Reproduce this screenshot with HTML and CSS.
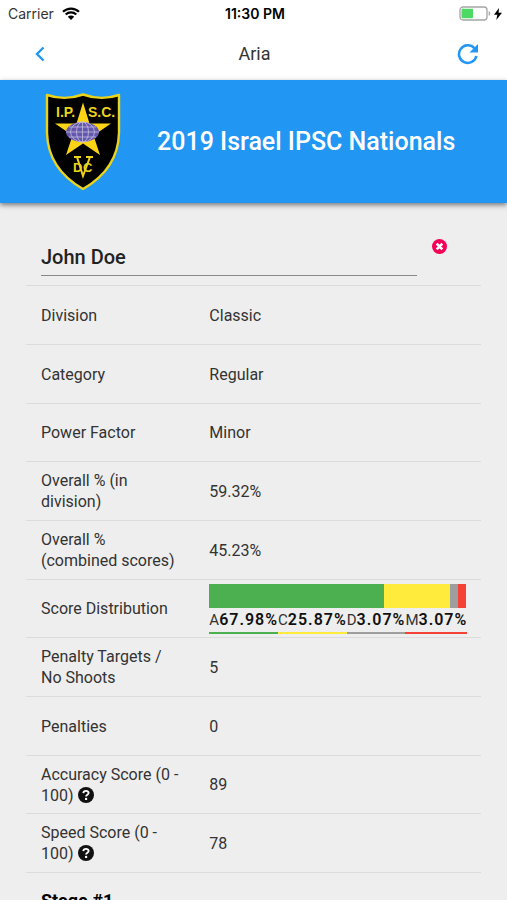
FILE: index.html
```html
<!DOCTYPE html>
<html lang="en">
<head>
<meta charset="utf-8">
<meta name="viewport" content="width=device-width, initial-scale=1">
<title>Aria</title>
	<link rel="stylesheet" href="styles.css">
</head>
<body>
	<div class="status-bar">
		<div class="carrier">
			<span>Carrier</span>
			<svg width="18" height="13" viewBox="0 0 18 13">
				<path d="M1 4.800a11.500 11.500 0 0 1 16 0M3.700 7.500a7.600 7.600 0 0 1 10.600 0" fill="none" stroke="#000" stroke-width="2.200"/>
				<path d="M9 13L5.800 9.700a4.600 4.600 0 0 1 6.400 0z"/>
			</svg>
		</div>
		<span class="time">11:30 PM</span>
		<div class="power">
			<svg width="32" height="15" viewBox="0 0 32 15">
				<rect x="1" y="1" width="27" height="13" rx="3" fill="#fff" stroke="#a5a5a5" stroke-width="1.300"/>
				<rect x="2.500" y="2.700" width="11.500" height="9.600" rx="1" fill="#4cd964"/>
				<path d="M29.700 5v5c2-.8 2-4.200 0-5z" fill="#a5a5a5"/>
			</svg>
			<svg width="8" height="12" viewBox="0 0 8 12">
				<path d="M5 0L0 6.800h3.300L2.300 12 8 4.800H4.600z"/>
			</svg>
		</div>
	</div>

	<nav class="nav-bar">
		<a href="#back" aria-label="Back">
			<svg width="24" height="24" viewBox="0 0 24 24">
				<path d="M15.500 5.500L9 12l6.500 6.500" fill="none" stroke="#2196f3" stroke-width="2.400"/>
			</svg>
		</a>
		<span>Aria</span>
		<button type="button" aria-label="Refresh">
			<svg width="22" height="22" viewBox="0 0 22 22">
				<path d="M17.300 5.200A8.800 8.800 0 1 0 19.400 13" fill="none" stroke="#2196f3" stroke-width="2.500"/>
				<path d="M21 1v8.500h-8.500z" fill="#2196f3"/>
			</svg>
		</button>
	</nav>

	<header class="match-header">
		<svg class="logo" width="76" height="98" viewBox="0 0 76 98">
			<path d="M2 2Q20 8 38 1.500Q56 8 74 2V40Q73 76 38 96Q3 76 2 40z" fill="#000" stroke="#ead31c" stroke-width="2.400" stroke-linejoin="round"/>
			<path d="M38 9.500l6.500 21H66L48.500 42.500l6.500 19.500L38 50.500 21 62l6.500-19.500L10 30.500h21.500z" fill="#fbd515"/>
			<ellipse cx="37.500" cy="39" rx="16.500" ry="10" fill="#6458ad"/>
			<g fill="none" stroke="#c4bde0" stroke-width=".8">
				<ellipse cx="37.500" cy="39" rx="12" ry="10"/>
				<ellipse cx="37.500" cy="39" rx="6" ry="10"/>
				<path d="M37.500 29v20M21 39h33M24 34h27M24 44h27"/>
			</g>
			<text x="11" y="24">I.P.</text>
			<text x="43" y="24">S.C.</text>
			<path d="M29 64h7M41 64h7M32 64l6 19 7-19" fill="none" stroke="#ead31c" stroke-width="2"/>
			<text class="logo-small" x="28" y="79">D</text>
			<text class="logo-small" x="38" y="79">C</text>
		</svg>
		<h1>2019 Israel IPSC Nationals</h1>
	</header>

	<main>
		<form class="shooter">
			<input type="text" value="John Doe" aria-label="Shooter">
			<button type="button" aria-label="Remove">
				<svg width="15" height="15" viewBox="0 0 15 15">
					<circle cx="7.500" cy="7.500" r="7.500" fill="#f50057"/>
					<path d="M4.700 4.700l5.600 5.600M10.300 4.700l-5.600 5.600" stroke="#fff" stroke-width="2.600"/>
				</svg>
			</button>
		</form>

		<table>
			<tr><th scope="row">Division</th><td>Classic</td></tr>
			<tr><th scope="row">Category</th><td>Regular</td></tr>
			<tr><th scope="row">Power Factor</th><td>Minor</td></tr>
			<tr><th scope="row">Overall % (in division)</th><td>59.32%</td></tr>
			<tr><th scope="row">Overall % (combined scores)</th><td>45.23%</td></tr>
			<tr>
				<th scope="row">Score Distribution</th>
				<td>
					<div class="bar">
						<div class="alpha" style="width: 67.98%"></div>
						<div class="charlie" style="width: 25.87%"></div>
						<div class="delta" style="width: 3.07%"></div>
						<div class="miss" style="width: 3.07%"></div>
					</div>
					<div class="legend">
						<span class="alpha">A<b>67.98%</b></span>
						<span class="charlie">C<b>25.87%</b></span>
						<span class="delta">D<b>3.07%</b></span>
						<span class="miss">M<b>3.07%</b></span>
					</div>
				</td>
			</tr>
			<tr><th scope="row">Penalty Targets / No Shoots</th><td>5</td></tr>
			<tr><th scope="row">Penalties</th><td>0</td></tr>
			<tr>
				<th scope="row">Accuracy Score (0 - 100)
					<svg class="help" width="16" height="16" viewBox="0 0 16 16">
						<circle cx="8" cy="8" r="8" fill="#111"/>
						<path d="M5.300 6.200C5.600 3 10.700 3.200 10.600 6c0 1.900-2.500 1.600-2.500 3.600" fill="none" stroke="#fff" stroke-width="1.900"/>
						<circle cx="8.100" cy="11.900" r="1.200" fill="#fff"/>
					</svg>
				</th>
				<td>89</td>
			</tr>
			<tr>
				<th scope="row">Speed Score (0 - 100)
					<svg class="help" width="16" height="16" viewBox="0 0 16 16">
						<circle cx="8" cy="8" r="8" fill="#111"/>
						<path d="M5.300 6.200C5.600 3 10.700 3.200 10.600 6c0 1.900-2.500 1.600-2.500 3.600" fill="none" stroke="#fff" stroke-width="1.900"/>
						<circle cx="8.100" cy="11.900" r="1.200" fill="#fff"/>
					</svg>
				</th>
				<td>78</td>
			</tr>
		</table>

		<h2>Stage #1</h2>
	</main>
</body>
</html>
```
FILE: styles.css
```css
* {
	box-sizing: border-box;
}
body {
	font-family: Roboto, sans-serif;
	font-size: 16px;
	line-height: 21px;
	color: #333;
	background: #eee;
	margin: 0;
	height: 100vh;
	display: flex;
	flex-direction: column;
	overflow: hidden;
}
svg {
	display: block;
}
button {
	border: 0;
	padding: 0;
	background: none;
	cursor: pointer;
}

/* phone status bar */
.status-bar {
	display: grid;
	grid-template-columns: 1fr auto 1fr;
	align-items: center;
	height: 27px;
	padding: 0 5px 0 8px;
	background: #fff;
	font-family: Inter, sans-serif;
	font-size: 14px;
}
.carrier, .power {
	display: flex;
	align-items: center;
}
.carrier {
	gap: 8px;
}
.power {
	justify-content: flex-end;
	gap: 3px;
}
.time {
	font-weight: 600;
	color: #000;
}

.nav-bar {
	display: flex;
	align-items: center;
	justify-content: space-between;
	height: 53px;
	padding: 0 28px;
	background: #fff;
	font-size: 18px;
}

.match-header {
	display: flex;
	align-items: center;
	gap: 36px;
	height: 123px;
	flex-shrink: 0;
	padding: 0 45px;
	background: #2196f3;
	box-shadow: 0 2px 5px rgba(0, 0, 0, 0.5);
}
.logo {
	flex-shrink: 0;
}
.logo text {
	font: bold 14px "Liberation Sans", sans-serif;
	fill: #ead31c;
}
.logo .logo-small {
	font-size: 13px;
}
h1 {
	margin: 0;
	font-size: 25px;
	font-weight: 500;
	line-height: 32px;
	white-space: nowrap;
	color: #fff;
}

main {
	flex: 1;
	min-height: 0;
	padding: 36px 26px 0;
}
.shooter {
	display: flex;
	align-items: flex-start;
	gap: 15px;
	height: 46px;
	padding: 0 34px 0 15px;
}
.shooter input {
	flex: 1;
	min-width: 0;
	height: 37px;
	padding: 0;
	border: 0;
	border-bottom: 1px solid #888;
	background: none;
	font: 500 20px Roboto, sans-serif;
	color: #222;
}

table {
	width: 100%;
	table-layout: fixed;
	border-spacing: 0;
}
th, td {
	height: 59px;
	padding: 0 15px;
	border-top: 1px solid #dcdcdc;
	font-weight: normal;
	text-align: left;
}
tr:nth-child(3n) > * {
	height: 58px;
}
th {
	width: 37%;
}
.help {
	display: inline-block;
	vertical-align: -2px;
}

/* score distribution */
.bar {
	display: flex;
	height: 24px;
}
.bar .alpha {
	background: #4caf50;
}
.bar .charlie {
	background: #ffeb3b;
}
.bar .delta {
	background: #9e9e9e;
}
.bar .miss {
	background: #f44336;
}
.legend {
	display: flex;
	font-size: 15px;
	line-height: 24px;
}
.legend span {
	border-bottom: 2px solid;
}
.legend span:last-child {
	flex: 1;
}
.legend .alpha {
	border-color: #4caf50;
}
.legend .charlie {
	border-color: #ffeb3b;
}
.legend .delta {
	border-color: #9e9e9e;
}
.legend .miss {
	border-color: #f44336;
}
.legend b {
	font-size: 16px;
	font-weight: 600;
	letter-spacing: 1px;
	color: #111;
}

h2 {
	margin: 0;
	padding: 16px 15px;
	border-top: 1px solid #dcdcdc;
	font-size: 18px;
	line-height: 24px;
	color: #000;
}
```
